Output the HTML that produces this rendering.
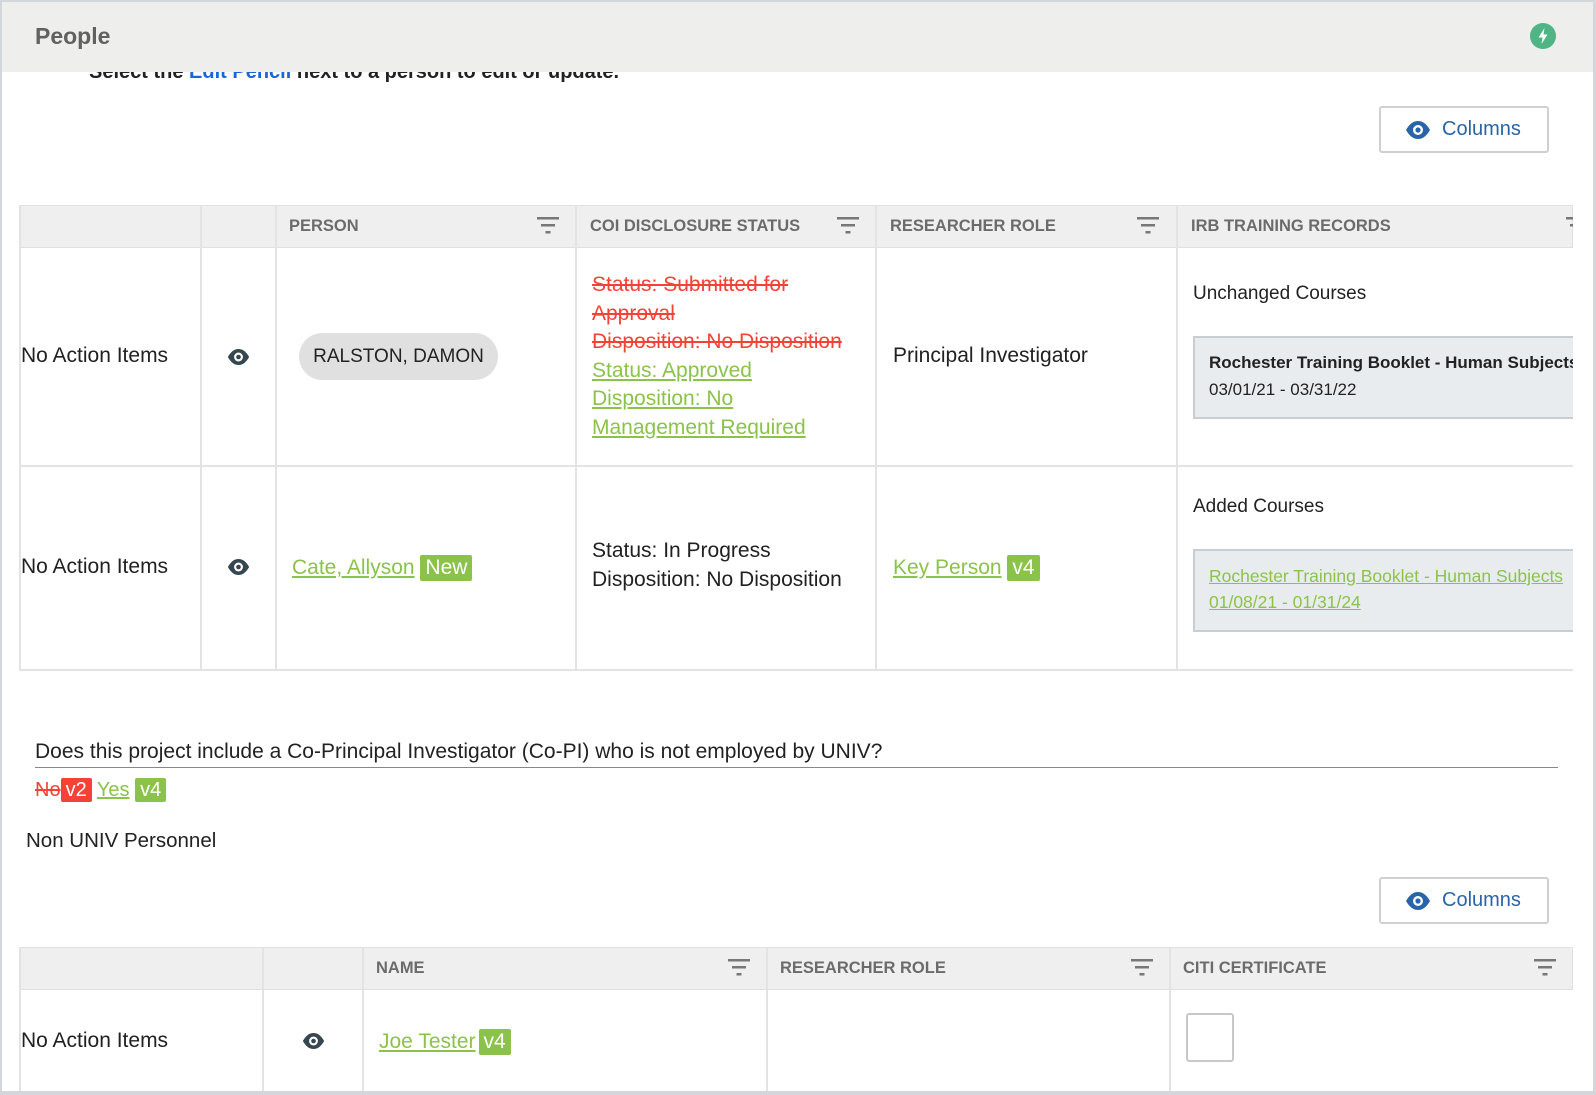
<!DOCTYPE html>
<html><head><meta charset="utf-8">
<style>
*{margin:0;padding:0;box-sizing:border-box}
body{width:1596px;height:1095px;overflow:hidden;background:#fff;font-family:"Liberation Sans",Arial,sans-serif;color:#212121;position:relative}
.a{position:absolute;white-space:nowrap}
.frame{position:absolute;left:0;top:0;width:1596px;height:1095px;border:2px solid #d3d7db;border-right-width:3px;border-bottom-width:4px;pointer-events:none;z-index:20}
.hdr{position:absolute;left:0;top:0;width:1596px;height:72px;background:#eeeeec;z-index:10}
.th{position:absolute;background:#efefef;border:1px solid #e0e0e0}
.lbl{position:absolute;font-size:17px;font-weight:bold;color:#6b6b6b;transform:scaleX(.97);transform-origin:left center}
.vl{position:absolute;width:2px;background:#e3e3e3}
.hl{position:absolute;height:2px;background:#e3e3e3}
.t20{font-size:21px;line-height:24px}
.grn{color:#8bc34a;text-decoration:underline}
.red{color:#f44336;text-decoration:line-through}
.bg{display:inline-block;color:#fff;padding:0 5px;border-radius:2px;text-decoration:none;line-height:26px}
.btn{position:absolute;border:2px solid #d0d0d0;border-radius:3px;background:#fff;color:#2a64a8;font-size:20px}
.box{position:absolute;background:#e9ecef;border:2px solid #c7cdd1;border-right:none;overflow:hidden}
.clip{position:absolute;left:1178px;top:248px;width:395px;height:420px;overflow:hidden}
</style></head><body>
<div class="hdr">
  <div class="a" style="left:35px;top:23px;font-size:23px;font-weight:bold;color:#616161">People</div>
  <svg class="a" style="left:1530px;top:23px" width="26" height="26" viewBox="0 0 26 26"><circle cx="13" cy="13" r="13" fill="#4fb584"/><path d="M14.5 5 L8.5 14.5 H12.5 L11.5 21 L17.5 11.5 H13.5 Z" fill="#fff"/></svg>
</div>
<div class="a" style="left:89px;top:61px;font-size:20px;font-weight:bold;color:#222">Select the <span style="color:#1a66d6">Edit Pencil</span> next to a person to edit or update.</div>
<div class="frame"></div>

<div class="btn" style="left:1379px;top:106px;width:170px;height:47px">
 <svg class="a" style="left:24px;top:13px" width="26" height="18" viewBox="0 0 26 18"><path d="M1 9 C5 2 9 0 13 0 C17 0 21 2 25 9 C21 16 17 18 13 18 C9 18 5 16 1 9Z" fill="#2a64a8"/><circle cx="13" cy="9" r="5" fill="#fff"/><circle cx="13" cy="9" r="2.6" fill="#2a64a8"/></svg>
 <span class="a" style="left:61px;top:10px">Columns</span>
</div>

<!-- table 1 -->
<div class="th" style="left:19px;top:205px;width:1554px;height:43px"></div>
<div class="lbl" style="left:289px;top:216px">PERSON</div>
<div class="lbl" style="left:590px;top:216px">COI DISCLOSURE STATUS</div>
<div class="lbl" style="left:890px;top:216px">RESEARCHER ROLE</div>
<div class="lbl" style="left:1191px;top:216px">IRB TRAINING RECORDS</div>
<svg class="a" style="left:537px;top:216px" width="24" height="18"><rect x="0" y="1" width="22" height="2.5" fill="#777"/><rect x="4" y="8" width="14" height="2.5" fill="#777"/><rect x="8.5" y="15" width="5" height="2.5" fill="#777"/></svg>
<svg class="a" style="left:837px;top:216px" width="24" height="18"><rect x="0" y="1" width="22" height="2.5" fill="#777"/><rect x="4" y="8" width="14" height="2.5" fill="#777"/><rect x="8.5" y="15" width="5" height="2.5" fill="#777"/></svg>
<svg class="a" style="left:1137px;top:216px" width="24" height="18"><rect x="0" y="1" width="22" height="2.5" fill="#777"/><rect x="4" y="8" width="14" height="2.5" fill="#777"/><rect x="8.5" y="15" width="5" height="2.5" fill="#777"/></svg>
<svg class="a" style="left:1566px;top:216px" width="7" height="18"><rect x="0" y="1" width="7" height="2.5" fill="#777"/><rect x="4" y="8" width="3" height="2.5" fill="#777"/></svg>

<div class="vl" style="left:19px;top:205px;height:465px"></div>
<div class="vl" style="left:200px;top:205px;height:465px"></div>
<div class="vl" style="left:275px;top:205px;height:465px"></div>
<div class="vl" style="left:575px;top:205px;height:465px"></div>
<div class="vl" style="left:875px;top:205px;height:465px"></div>
<div class="vl" style="left:1176px;top:205px;height:465px"></div>
<div class="hl" style="left:19px;top:465px;width:1554px"></div>
<div class="hl" style="left:19px;top:669px;width:1554px"></div>

<!-- row 1 -->
<div class="a t20" style="left:21px;top:344px">No Action Items</div>
<svg class="a" style="left:226px;top:349px" width="25" height="16" viewBox="0 0 26 18"><path d="M1 9 C5 2 9 0 13 0 C17 0 21 2 25 9 C21 16 17 18 13 18 C9 18 5 16 1 9Z" fill="#37474f"/><circle cx="13" cy="9" r="5" fill="#fff"/><circle cx="13" cy="9" r="2.6" fill="#37474f"/></svg>
<div class="a" style="left:299px;top:333px;width:199px;height:47px;border-radius:24px;background:#e0e0e0;font-size:19px;line-height:47px;text-align:center;color:#222">RALSTON, DAMON</div>
<div class="a" style="left:592px;top:271px;font-size:21px;line-height:28.5px">
 <div class="red">Status: Submitted for</div>
 <div class="red">Approval</div>
 <div class="red">Disposition: No Disposition</div>
 <div class="grn">Status: Approved</div>
 <div class="grn">Disposition: No</div>
 <div class="grn">Management Required</div>
</div>
<div class="a t20" style="left:893px;top:344px">Principal Investigator</div>
<div class="clip">
 <div class="a" style="left:15px;top:35px;font-size:19px;color:#222">Unchanged Courses</div>
 <div class="box" style="left:15px;top:88px;width:400px;height:83px"></div>
 <div class="a" style="left:31px;top:105px;font-size:17px;font-weight:bold;color:#222">Rochester Training Booklet - Human Subjects</div>
 <div class="a" style="left:31px;top:132px;font-size:17px;color:#222">03/01/21 - 03/31/22</div>
 <div class="a" style="left:15px;top:248px;font-size:19px;color:#222">Added Courses</div>
 <div class="box" style="left:15px;top:301px;width:400px;height:83px"></div>
 <div class="a grn" style="left:31px;top:318px;font-size:17.5px">Rochester Training Booklet - Human Subjects</div>
 <div class="a grn" style="left:31px;top:344px;font-size:17.5px">01/08/21 - 01/31/24</div>
</div>

<!-- row 2 -->
<div class="a t20" style="left:21px;top:555px">No Action Items</div>
<svg class="a" style="left:226px;top:559px" width="25" height="16" viewBox="0 0 26 18"><path d="M1 9 C5 2 9 0 13 0 C17 0 21 2 25 9 C21 16 17 18 13 18 C9 18 5 16 1 9Z" fill="#37474f"/><circle cx="13" cy="9" r="5" fill="#fff"/><circle cx="13" cy="9" r="2.6" fill="#37474f"/></svg>
<div class="a t20" style="left:292px;top:555px"><span class="grn">Cate, Allyson</span> <span class="bg" style="background:#8bc34a">New</span></div>
<div class="a" style="left:592px;top:537px;font-size:21px;line-height:28.5px">Status: In Progress<br>Disposition: No Disposition</div>
<div class="a t20" style="left:893px;top:555px"><span class="grn">Key Person</span> <span class="bg" style="background:#8bc34a">v4</span></div>

<!-- question -->
<div class="a" style="left:35px;top:740px;font-size:21px;color:#222">Does this project include a Co-Principal Investigator (Co-PI) who is not employed by UNIV?</div>
<div class="a" style="left:35px;top:767px;width:1523px;height:1px;background:#888"></div>
<div class="a" style="left:35px;top:778px;font-size:20px;line-height:24px"><span class="red">No</span><span class="bg" style="background:#f44336;line-height:24px">v2</span> <span class="grn">Yes</span> <span class="bg" style="background:#8bc34a;line-height:24px">v4</span></div>
<div class="a" style="left:26px;top:829px;font-size:20.5px;color:#222">Non UNIV Personnel</div>

<div class="btn" style="left:1379px;top:877px;width:170px;height:47px">
 <svg class="a" style="left:24px;top:13px" width="26" height="18" viewBox="0 0 26 18"><path d="M1 9 C5 2 9 0 13 0 C17 0 21 2 25 9 C21 16 17 18 13 18 C9 18 5 16 1 9Z" fill="#2a64a8"/><circle cx="13" cy="9" r="5" fill="#fff"/><circle cx="13" cy="9" r="2.6" fill="#2a64a8"/></svg>
 <span class="a" style="left:61px;top:10px">Columns</span>
</div>

<!-- table 2 -->
<div class="th" style="left:19px;top:947px;width:1554px;height:43px"></div>
<div class="lbl" style="left:376px;top:958px">NAME</div>
<div class="lbl" style="left:780px;top:958px">RESEARCHER ROLE</div>
<div class="lbl" style="left:1183px;top:958px">CITI CERTIFICATE</div>
<svg class="a" style="left:728px;top:958px" width="24" height="18"><rect x="0" y="1" width="22" height="2.5" fill="#777"/><rect x="4" y="8" width="14" height="2.5" fill="#777"/><rect x="8.5" y="15" width="5" height="2.5" fill="#777"/></svg>
<svg class="a" style="left:1131px;top:958px" width="24" height="18"><rect x="0" y="1" width="22" height="2.5" fill="#777"/><rect x="4" y="8" width="14" height="2.5" fill="#777"/><rect x="8.5" y="15" width="5" height="2.5" fill="#777"/></svg>
<svg class="a" style="left:1534px;top:958px" width="24" height="18"><rect x="0" y="1" width="22" height="2.5" fill="#777"/><rect x="4" y="8" width="14" height="2.5" fill="#777"/><rect x="8.5" y="15" width="5" height="2.5" fill="#777"/></svg>
<div class="vl" style="left:19px;top:947px;height:148px"></div>
<div class="vl" style="left:262px;top:947px;height:148px"></div>
<div class="vl" style="left:362px;top:947px;height:148px"></div>
<div class="vl" style="left:766px;top:947px;height:148px"></div>
<div class="vl" style="left:1169px;top:947px;height:148px"></div>

<div class="a t20" style="left:21px;top:1029px">No Action Items</div>
<svg class="a" style="left:301px;top:1033px" width="25" height="16" viewBox="0 0 26 18"><path d="M1 9 C5 2 9 0 13 0 C17 0 21 2 25 9 C21 16 17 18 13 18 C9 18 5 16 1 9Z" fill="#37474f"/><circle cx="13" cy="9" r="5" fill="#fff"/><circle cx="13" cy="9" r="2.6" fill="#37474f"/></svg>
<div class="a t20" style="left:379px;top:1029px"><span class="grn">Joe Tester</span><span class="bg" style="background:#8bc34a;margin-left:3px">v4</span></div>
<div class="a" style="left:1186px;top:1013px;width:48px;height:49px;border:2px solid #c8c8c8;border-radius:3px"></div>
</body></html>
